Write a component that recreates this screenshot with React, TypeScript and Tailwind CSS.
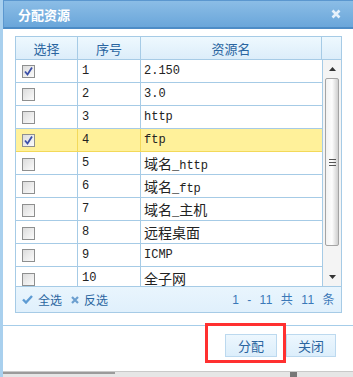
const rows = [
  { id: 1, name: "2.150", checked: true },
  { id: 2, name: "3.0" },
  { id: 3, name: "http" },
  { id: 4, name: "ftp", checked: true, active: true },
  { id: 5, name: "域名_http" },
  { id: 6, name: "域名_ftp" },
  { id: 7, name: "域名_主机" },
  { id: 8, name: "远程桌面" },
  { id: 9, name: "ICMP" },
  { id: 10, name: "全子网" },
];

const font = "font-['Liberation_Mono','Noto_Sans_CJK_SC',monospace]";

// chinese chars render a bit larger than the ascii ones in the original
const Mixed = ({ text }: { text: string }) => (
  <>
    {text.split(/([\u4e00-\u9fff]+)/).filter(Boolean).map((part, i) =>
      /[\u4e00-\u9fff]/.test(part) ? (
        <span key={i} className="text-[14px] font-['Noto_Sans_CJK_SC',sans-serif]">{part}</span>
      ) : (
        <span key={i}>{part}</span>
      )
    )}
  </>
);

const Checkbox = ({ checked }: { checked?: boolean }) => (
  <div className="w-[13px] h-[13px] border border-[#8e8f8f] bg-gradient-to-br from-[#dcdcdc] to-[#fbfbfb] flex items-center justify-center">
    {checked && (
      <svg width="11" height="11" viewBox="0 0 11 11">
        <path d="M2 5.5 L4.5 8.5 L9 1.5" fill="none" stroke="#3b4fa8" strokeWidth="1.8" />
      </svg>
    )}
  </div>
);

const App = () => {
  return (
    <div className="relative w-[353px] h-[377px] overflow-hidden bg-white border-l-[3px] border-[#a9d0ee] font-['Noto_Sans_CJK_SC',sans-serif]">
      {/* title */}
      <div className="h-[29px] flex items-center justify-between pl-[14px] pr-[12px] bg-gradient-to-b from-[#8bbde6] to-[#6aa6da] border-t border-l border-[#5b97cf] border-b-[2px] border-b-[#4d8cc6]">
        <span className="text-[13px] font-bold text-white leading-none">分配资源</span>
        <svg width="10" height="10" viewBox="0 0 10 10">
          <path d="M1.5 1.5 L8.5 8.5 M8.5 1.5 L1.5 8.5" stroke="#e6f1fb" strokeWidth="2.6" />
        </svg>
      </div>

      {/* grid */}
      <div className="ml-[12px] mt-[7px] w-[327px] border border-[#a6cbe6]">
        <div className="grid grid-cols-[62px_63px_181px_1fr] h-[23px] bg-gradient-to-b from-[#eef8fe] to-[#dcedfa] border-b border-[#a6cbe6] text-[13px] text-[#2a65a0] leading-none">
          <div className="flex items-center justify-center border-r border-[#a6cbe6]">选择</div>
          <div className="flex items-center justify-center border-r border-[#a6cbe6]">序号</div>
          <div className="flex items-center justify-center border-r border-[#a6cbe6]">资源名</div>
          <div />
        </div>
        <div className="flex h-[226px] overflow-hidden">
          <div className="w-[307px] border-r border-[#a6cbe6]">
            {rows.map((r) => (
              <div
                key={r.id}
                className={`grid grid-cols-[62px_63px_1fr] h-[23px] border-b ${r.active ? "bg-[#fff19a] border-[#f3d95a]" : "border-[#a6cbe6]"}`}
              >
                <div className={`flex items-center pl-[6px] border-r ${r.active ? "border-[#f3d95a]" : "border-[#a6cbe6]"}`}>
                  <Checkbox checked={r.checked} />
                </div>
                <div className={`pl-[4px] text-[12px] leading-[22px] text-[#222] border-r ${font} ${r.active ? "border-[#f3d95a]" : "border-[#a6cbe6]"}`}>
                  {r.id}
                </div>
                <div className={`pl-[3px] text-[12px] leading-[22px] text-[#222] whitespace-nowrap ${font}`}>
                  <Mixed text={r.name} />
                </div>
              </div>
            ))}
          </div>
          <div className="flex-1 flex flex-col bg-[#f4f4f4] px-[2px]">
            <div className="h-[18px] flex items-center justify-center">
              <svg width="7" height="4" viewBox="0 0 7 4"><path d="M0 4 L3.5 0 L7 4Z" fill="#333" /></svg>
            </div>
            <div className="h-[168px] rounded-[2px] border border-[#a4a4a4] bg-gradient-to-r from-[#f2f2f2] via-[#fdfdfd] to-[#cfcfcf] flex items-center justify-center">
              <div className="flex flex-col gap-[2px]">
                <div className="w-[7px] h-px bg-[#555]" />
                <div className="w-[7px] h-px bg-[#555]" />
                <div className="w-[7px] h-px bg-[#555]" />
              </div>
            </div>
            <div className="flex-1" />
            <div className="h-[18px] flex items-center justify-center">
              <svg width="7" height="4" viewBox="0 0 7 4"><path d="M0 0 L3.5 4 L7 0Z" fill="#333" /></svg>
            </div>
          </div>
        </div>
        <div className="h-[26px] flex items-center justify-between pl-[6px] pr-[6px] bg-gradient-to-b from-[#e9f5fd] to-[#e0f0fc] border-t border-[#a6cbe6] text-[12px] text-[#2a65a0] leading-none">
          <div className="flex items-center">
            <svg width="11" height="9" viewBox="0 0 11 9">
              <path d="M1 4.5 L4 7.5 L10 1" fill="none" stroke="#5d9bd3" strokeWidth="2.4" />
            </svg>
            <span className="ml-[5px]">全选</span>
            <svg className="ml-[9px]" width="8" height="8" viewBox="0 0 8 8">
              <path d="M1 1 L7 7 M7 1 L1 7" stroke="#6c9fcf" strokeWidth="2.2" />
            </svg>
            <span className="ml-[5px]">反选</span>
          </div>
          <span className="text-[#3a78b8] font-['Liberation_Sans','Noto_Sans_CJK_SC',sans-serif] tracking-[0.5px] [word-spacing:4px]">1 - 11 共 11 条</span>
        </div>
      </div>

      {/* footer */}
      <div className="mt-[12px] border-t border-[#a6cde9] flex justify-end gap-[9px] pt-[8px] pr-[17px]">
        <button className="w-[52px] h-[23px] border border-[#bcd9ef] bg-gradient-to-b from-[#edf7fe] to-[#dceefb] text-[13px] text-[#2a65a0] leading-none">
          分配
        </button>
        <button className="w-[50px] h-[23px] border border-[#bcd9ef] bg-gradient-to-b from-[#edf7fe] to-[#dceefb] text-[13px] text-[#2a65a0] leading-none">
          关闭
        </button>
      </div>

      {/* annotation */}
      <div className="absolute left-[202px] top-[323px] w-[81px] h-[40px] border-[3px] border-[#ff3030]" />

      {/* bottom strip */}
      <div className="absolute left-[-3px] right-0 bottom-0 h-[6px] bg-[#e6e6e6] border-t border-[#c9c9c9]">
        <div className="w-[115px] h-[2px] bg-[#9b9b9b]" />
        <div className="absolute left-[290px] top-0 w-[7px] h-[5px] bg-[#777]" />
      </div>
    </div>
  );
};

export default App;
